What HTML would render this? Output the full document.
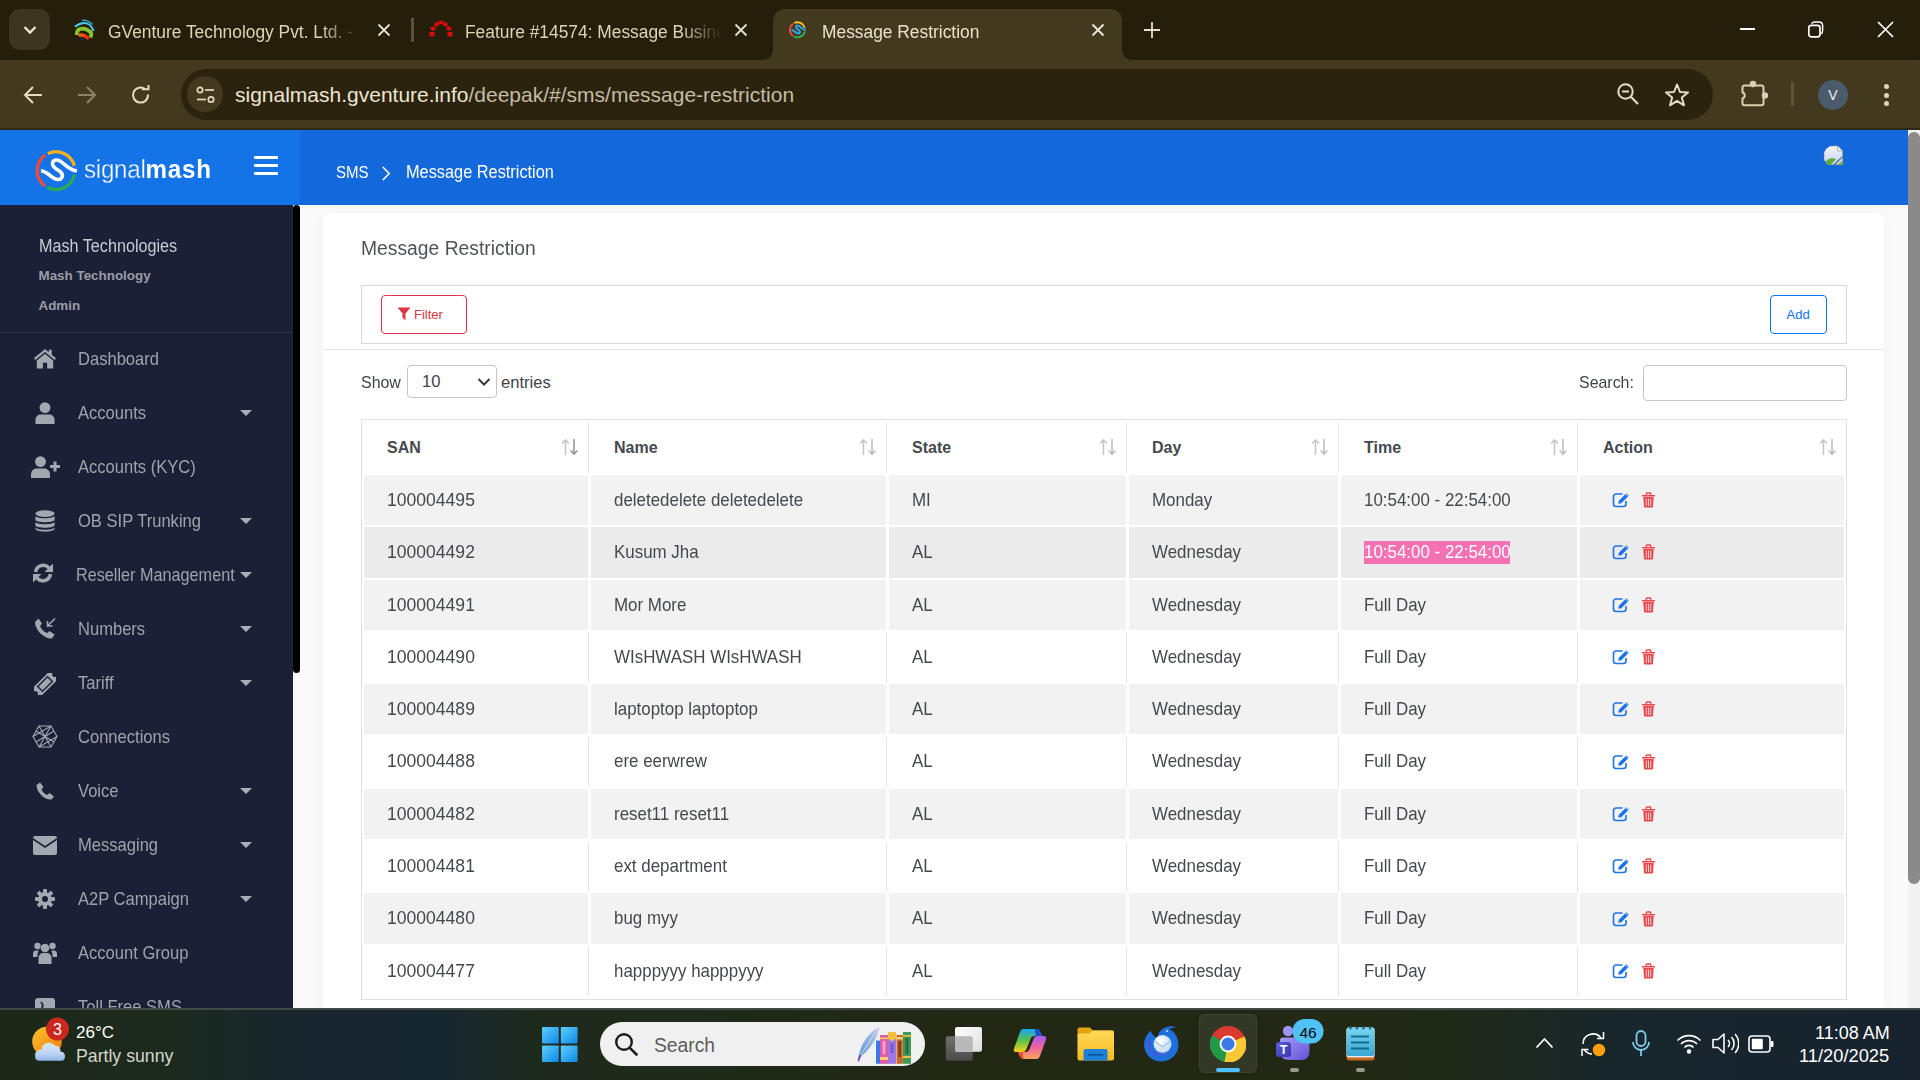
<!DOCTYPE html>
<html><head><meta charset="utf-8">
<style>
*{box-sizing:border-box;margin:0;padding:0}
html,body{width:1920px;height:1080px;overflow:hidden;font-family:"Liberation Sans",sans-serif;background:#fafafa}
.a{position:absolute}
svg{display:block}
/* chrome */
#tabstrip{left:0;top:0;width:1920px;height:61px;background:#251e0a}
#toolbar{left:0;top:60px;width:1920px;height:70px;background:#433b22}
.tabt{font-size:18px;color:#ddd4b8;white-space:nowrap;top:22px;transform:scaleX(0.965);transform-origin:0 0}
#omni{left:181px;top:69px;width:1532px;height:51px;border-radius:26px;background:#2b230e}
/* header */
#hdrL{left:0;top:130px;width:300px;height:75px;background:#1573e8}
#hdrR{left:300px;top:130px;width:1608px;height:75px;background:#1368db}
/* sidebar */
#side{left:0;top:205px;width:293px;height:803px;background:#1c2036;overflow:hidden}
.mi{position:absolute;left:0;width:293px;height:54px}
.mi .t{position:absolute;left:78px;top:17px;font-size:18.4px;line-height:normal;color:#9fa4ab;white-space:nowrap;transform:scaleX(0.9);transform-origin:0 0}
.mi .ic{position:absolute;left:31px;top:14px;width:28px;height:26px}
.mi .car{position:absolute;left:240px;top:25px;width:0;height:0;border-left:6px solid transparent;border-right:6px solid transparent;border-top:6px solid #a9adb6}
/* content */
#content{left:300px;top:205px;width:1608px;height:803px;background:#fafafa}
#card{left:323px;top:213px;width:1561px;height:800px;background:#fff;border-radius:6px;box-shadow:0 0 12px rgba(0,0,0,0.035)}
table{border-collapse:separate;border-spacing:0}
.th{font-weight:bold;font-size:16px;color:#46494f;white-space:nowrap}
.td{font-size:18.4px;color:#45484f;white-space:nowrap;transform:scaleX(0.92);transform-origin:0 0}
.tdn{transform:scaleX(0.955)}
/* taskbar */
#taskbar{left:0;top:1008px;width:1920px;height:72px;background:linear-gradient(90deg,#1d2818 0%,#1c2a1d 8%,#182630 16%,#172730 23%,#1e2a1c 28%,#1f2a1a 36%,#232814 50%,#222814 70%,#1f2a17 75%,#18262d 85%,#17222e 100%);border-top:2px solid #434a45}
</style></head><body>

<!-- ============ BROWSER CHROME ============ -->
<div id="tabstrip" class="a"></div>
<div class="a" style="left:9px;top:9px;width:41px;height:41px;border-radius:11px;background:#3d3521"></div>
<svg class="a" style="left:22px;top:24px" width="16" height="12" viewBox="0 0 16 12"><path d="M2.5 3 L8 8.5 L13.5 3" fill="none" stroke="#ece6d4" stroke-width="2.4"/></svg>
<!-- tab1 -->
<svg class="a" style="left:70px;top:15px" width="30" height="30" viewBox="0 0 30 30">
 <path d="M12 5.3 Q18 4.6 22.5 9.5" fill="none" stroke="#35a6c6" stroke-width="1.5"/>
 <path d="M5 11.8 Q11 6.8 17 8.4 Q21.5 10.3 23.5 16" fill="none" stroke="#46c8ea" stroke-width="2.1"/>
 <path d="M6.8 20 Q6.5 14.8 10.5 13.8 Q16 13 20.5 17 Q22 19 20.5 22.5" fill="none" stroke="#84c62c" stroke-width="3.8"/>
 <defs><linearGradient id="gvr" x1="0" y1="0" x2="1" y2="0"><stop offset="0" stop-color="#ff7a10"/><stop offset="1" stop-color="#ff1a0a"/></linearGradient></defs>
 <path d="M8.5 20.3 Q13.5 18.8 18.8 23.8" fill="none" stroke="url(#gvr)" stroke-width="3.2"/>
 <path d="M10.5 23 Q12.5 23.8 13.8 25.2" fill="none" stroke="#22307a" stroke-width="1.4"/>
</svg>
<div class="a tabt" style="left:108px;width:260px;overflow:hidden;-webkit-mask-image:linear-gradient(90deg,#000 85%,transparent 100%)">GVenture Technology Pvt. Ltd. - Signalmash</div>
<svg class="a" style="left:377px;top:23px" width="14" height="14" viewBox="0 0 14 14"><path d="M1.5 1.5 L12.5 12.5 M12.5 1.5 L1.5 12.5" stroke="#e6dfc9" stroke-width="1.8"/></svg>
<div class="a" style="left:411px;top:18px;width:3px;height:24px;background:#5a523b"></div>
<!-- tab2 -->
<svg class="a" style="left:428px;top:20px" width="26" height="18" viewBox="0 0 26 18">
 <g fill="#d40c0c">
 <rect x="1.5" y="12" width="5" height="4.5"/><rect x="19.5" y="12" width="5" height="4.5"/>
 <rect x="2.8" y="6.6" width="4.6" height="4" transform="rotate(-25 5 8.6)"/><rect x="18.6" y="6.6" width="4.6" height="4" transform="rotate(25 21 8.6)"/>
 <rect x="6.5" y="2.3" width="4.4" height="4" transform="rotate(-45 8.7 4.3)"/><rect x="15.1" y="2.3" width="4.4" height="4" transform="rotate(45 17.3 4.3)"/>
 <rect x="10.8" y="0.6" width="4.4" height="3.6"/>
 </g>
</svg>
<div class="a tabt" style="left:465px;width:266px;overflow:hidden;-webkit-mask-image:linear-gradient(90deg,#000 84%,transparent 100%)">Feature #14574: Message Business Restriction</div>
<svg class="a" style="left:734px;top:23px" width="14" height="14" viewBox="0 0 14 14"><path d="M1.5 1.5 L12.5 12.5 M12.5 1.5 L1.5 12.5" stroke="#e6dfc9" stroke-width="1.8"/></svg>
<!-- active tab -->
<div class="a" style="left:773px;top:9px;width:349px;height:52px;background:#42391f;border-radius:12px 12px 0 0"></div>
<svg class="a" style="left:761px;top:48px" width="12" height="12" viewBox="0 0 12 12"><path d="M0 12 Q12 12 12 0 L12 12 Z" fill="#42391f"/></svg>
<svg class="a" style="left:1122px;top:48px" width="12" height="12" viewBox="0 0 12 12"><path d="M12 12 Q0 12 0 0 L0 12 Z" fill="#42391f"/></svg>
<svg class="a" style="left:787px;top:19px" width="22" height="22" viewBox="0 0 55 52">
 <path d="M15.25 10.12 A18.9 18.9 0 0 0 15.0 40.9" fill="none" stroke="#ef4a3a" stroke-width="4.6"/>
 <path d="M17.82 8.61 A18.9 18.9 0 0 1 44.36 20.71" fill="none" stroke="#f9c21a" stroke-width="4.6"/>
 <path d="M44.6 29.53 A18.9 18.9 0 0 1 17.23 42.29" fill="none" stroke="#2fb45a" stroke-width="4.6"/>
 <path d="M11 26 C17 25.5 22 34.5 28 34.5 C32.5 34.5 34 29.5 30 26.5 C26.5 24 22.5 22.5 22.5 18.5 C22.5 15 26.5 14 30 16 C35 19 40 25.8 47 25.8" fill="none" stroke="#29a9f1" stroke-width="5"/>
</svg>
<div class="a tabt" style="left:822px;color:#e9e2cc">Message Restriction</div>
<svg class="a" style="left:1091px;top:23px" width="14" height="14" viewBox="0 0 14 14"><path d="M1.5 1.5 L12.5 12.5 M12.5 1.5 L1.5 12.5" stroke="#efe9d8" stroke-width="1.8"/></svg>
<svg class="a" style="left:1144px;top:22px" width="16" height="16" viewBox="0 0 16 16"><path d="M8 0 V16 M0 8 H16" stroke="#e6dfc9" stroke-width="1.8"/></svg>
<!-- window controls -->
<div class="a" style="left:1740px;top:28px;width:15px;height:2px;background:#fff"></div>
<svg class="a" style="left:1807px;top:21px" width="17" height="17" viewBox="0 0 17 17"><rect x="1.8" y="4.3" width="11.2" height="11.5" rx="2.6" fill="none" stroke="#fff" stroke-width="1.7"/><path d="M4.6 2.6 Q5.5 1 8 1 H12 Q15.6 1 15.6 4.6 V9.5 Q15.6 12 14.2 12.8" fill="none" stroke="#fff" stroke-width="1.5"/></svg>
<svg class="a" style="left:1877px;top:21px" width="17" height="17" viewBox="0 0 17 17"><path d="M1 1 L16 16 M16 1 L1 16" stroke="#fff" stroke-width="1.7"/></svg>

<div id="toolbar" class="a"></div>
<div class="a" style="left:0;top:60px;width:1920px;height:70px;background:#42391f;border-radius:9px 9px 0 0"></div>
<div class="a" style="left:0;top:128px;width:1920px;height:2px;background:#2f2812"></div>
<svg class="a" style="left:23px;top:85px" width="20" height="20" viewBox="0 0 20 20"><path d="M19 10 H2.5 M10 2 L2 10 L10 18" fill="none" stroke="#e4dcc3" stroke-width="2"/></svg>
<svg class="a" style="left:77px;top:85px" width="20" height="20" viewBox="0 0 20 20"><path d="M1 10 H17.5 M10 2 L18 10 L10 18" fill="none" stroke="#8c836a" stroke-width="2"/></svg>
<svg class="a" style="left:131px;top:85px" width="20" height="20" viewBox="0 0 20 20"><path d="M17 9.5 A7.5 7.5 0 1 1 14.3 4.3" fill="none" stroke="#e4dcc3" stroke-width="2"/><path d="M11 4.2 H17.5 V-2" fill="none" stroke="#e4dcc3" stroke-width="2"/></svg>
<div id="omni" class="a"></div>
<div class="a" style="left:187px;top:76px;width:36px;height:36px;border-radius:18px;background:#42391f"></div>
<svg class="a" style="left:195px;top:84px" width="22" height="22" viewBox="0 0 22 22"><circle cx="5" cy="6" r="2.7" fill="none" stroke="#e4dcc3" stroke-width="1.7"/><path d="M10 6 H19" stroke="#e4dcc3" stroke-width="1.7"/><circle cx="16" cy="15.5" r="2.7" fill="none" stroke="#e4dcc3" stroke-width="1.7"/><path d="M2 15.5 H11" stroke="#e4dcc3" stroke-width="1.7"/></svg>
<div class="a" style="left:235px;top:82.5px;font-size:21px;color:#ece5d2;white-space:nowrap;transform:scaleX(1);transform-origin:0 0">signalmash.gventure.info<span style="color:#c4bca4">/deepak/#/sms/message-restriction</span></div>
<svg class="a" style="left:1616px;top:82px" width="24" height="24" viewBox="0 0 24 24"><circle cx="9.5" cy="9.5" r="7.2" fill="none" stroke="#e4dcc3" stroke-width="2"/><path d="M6 9.5 H13" stroke="#e4dcc3" stroke-width="2"/><path d="M14.8 14.8 L22 22" stroke="#e4dcc3" stroke-width="2.2"/></svg>
<svg class="a" style="left:1664px;top:82px" width="26" height="26" viewBox="0 0 26 26"><path d="M13 2.5 L16 10 L24 10.5 L17.8 15.5 L20 23.3 L13 18.8 L6 23.3 L8.2 15.5 L2 10.5 L10 10 Z" fill="none" stroke="#e4dcc3" stroke-width="2" stroke-linejoin="round"/></svg>
<svg class="a" style="left:1740px;top:80px" width="28" height="28" viewBox="0 0 28 28"><path d="M4.5 5.5 H10.5 A2.6 2.6 0 0 1 15.5 5.5 H21.5 Q23.5 5.5 23.5 7.5 V13 A2.6 2.6 0 0 1 23.5 18 V23.5 Q23.5 25.3 21.5 25.3 H4.5 Q2.5 25.3 2.5 23.5 V18.3 A3 3 0 0 0 2.5 12.5 V7.5 Q2.5 5.5 4.5 5.5 Z" fill="none" stroke="#dccfb0" stroke-width="2" stroke-linejoin="round"/><circle cx="13" cy="4" r="3.2" fill="#dccfb0"/><circle cx="25" cy="15.5" r="3.2" fill="#dccfb0"/></svg>
<div class="a" style="left:1791px;top:82px;width:3px;height:24px;background:#5e5538"></div>
<div class="a" style="left:1818px;top:80px;width:30px;height:30px;border-radius:15px;background:#4a5c6b;color:#f2f2f2;font-size:14px;line-height:30px;text-align:center">V</div>
<div class="a" style="left:1884.2px;top:84.2px;width:5px;height:5px;border-radius:2.5px;background:#e0d6b8"></div>
<div class="a" style="left:1884.2px;top:92.5px;width:5px;height:5px;border-radius:2.5px;background:#e0d6b8"></div>
<div class="a" style="left:1884.2px;top:100.5px;width:5px;height:5px;border-radius:2.5px;background:#e0d6b8"></div>

<!-- ============ HEADER ============ -->
<div id="hdrL" class="a"></div>
<div id="hdrR" class="a"></div>
<svg class="a" style="left:30px;top:145px" width="55" height="52" viewBox="0 0 55 52">
 <path d="M15.25 10.12 A18.9 18.9 0 0 0 15.0 40.9" fill="none" stroke="#ef4a3a" stroke-width="3.3"/>
 <path d="M17.82 8.61 A18.9 18.9 0 0 1 44.36 20.71" fill="none" stroke="#f9b219" stroke-width="3.3"/>
 <path d="M44.6 29.53 A18.9 18.9 0 0 1 17.23 42.29" fill="none" stroke="#2fa94f" stroke-width="3.3"/>
 <path d="M11 26 C17 25.5 22 34.5 28 34.5 C32.5 34.5 34 29.5 30 26.5 C26.5 24 22.5 22.5 22.5 18.5 C22.5 15 26.5 14 30 16 C35 19 40 25.8 47 25.8" fill="none" stroke="#fff" stroke-width="3.6" stroke-linecap="butt"/>
</svg>
<div class="a" style="left:84px;top:154px;font-size:26px;color:#fff;white-space:nowrap;transform:scaleX(0.93);transform-origin:0 0;letter-spacing:-0.3px"><span style="-webkit-text-stroke:0.35px #1573e8">signal</span><b style="font-weight:bold;letter-spacing:0.8px">mash</b></div>
<div class="a" style="left:254px;top:156px;width:24px;height:3px;background:#fff;border-radius:1px"></div>
<div class="a" style="left:254px;top:164px;width:24px;height:3px;background:#fff;border-radius:1px"></div>
<div class="a" style="left:254px;top:172px;width:24px;height:3px;background:#fff;border-radius:1px"></div>
<div class="a" style="left:336px;top:162.7px;font-size:16.5px;color:#fff;white-space:nowrap;transform:scaleX(0.91);transform-origin:0 0">SMS</div>
<svg class="a" style="left:381px;top:165.5px" width="10" height="15" viewBox="0 0 10 15"><path d="M1.8 1 L8.2 7.5 L1.8 14" fill="none" stroke="#fff" stroke-width="1.6"/></svg>
<div class="a" style="left:406px;top:161.3px;font-size:18.3px;color:#fff;white-space:nowrap;transform:scaleX(0.893);transform-origin:0 0">Message Restriction</div>
<svg class="a" style="left:1823px;top:145px" width="26" height="22" viewBox="0 0 26 22">
 <defs><clipPath id="bic"><circle cx="11" cy="11" r="10.5"/><rect x="11" y="0" width="15" height="22"/></clipPath>
 <linearGradient id="bg1" x1="0" y1="0" x2="0" y2="1"><stop offset="0" stop-color="#f4f7fc"/><stop offset="1" stop-color="#c3d3ee"/></linearGradient></defs>
 <g clip-path="url(#bic)">
  <path d="M1 1 H14.5 L19.5 6 V11 L10.5 19.5 H1 Z" fill="url(#bg1)" stroke="#b8a482" stroke-width="0.8"/>
  <path d="M14.5 1 V6 H19.5" fill="#eeeeee" stroke="#a9a9a9" stroke-width="0.9"/>
  <path d="M1 19.5 C3 13.5 9 12 13 14 L8 19.5 Z" fill="#5aae35"/>
  <path d="M12.5 19.5 L19.5 12.5 V19.5 Z" fill="#c9d7ec" stroke="#b8a482" stroke-width="0.8"/>
  <path d="M15 19.5 L19.5 16 V19.5 Z" fill="#5aae35"/>
 </g>
</svg>

<!-- ============ SIDEBAR ============ -->
<div id="side" class="a">
 <div class="a" style="left:38.5px;top:30px;font-size:18.3px;color:#c9cbd2;white-space:nowrap;transform:scaleX(0.885);transform-origin:0 0">Mash Technologies</div>
 <div class="a" style="left:38.5px;top:63.3px;font-size:13.4px;font-weight:bold;color:#9a9da6;white-space:nowrap">Mash Technology</div>
 <div class="a" style="left:38.5px;top:93.3px;font-size:13.4px;font-weight:bold;color:#9a9da6;white-space:nowrap">Admin</div>
 <div class="a" style="left:0;top:127px;width:293px;height:1px;background:#2c3049"></div>
 <!-- menu items: first center at y=358 abs -> 153 rel -->
 <div class="mi" style="top:126px"><svg class="ic" viewBox="0 0 28 26" style="left:30px;top:15px;width:30px;height:25px"><path d="M14 3.2 L2.5 12.8 L4 14.6 L14 6.2 L24 14.6 L25.5 12.8 L21 9.1 V4 H18 V6.5 Z" fill="#a3a7b0"/><path d="M14 8 L5.5 15 V23.5 H11.8 V17.5 H16.2 V23.5 H22.5 V15 Z" fill="#a3a7b0"/></svg><div class="t">Dashboard</div></div>
 <div class="mi" style="top:180px"><svg class="ic" viewBox="0 0 20 22" style="left:35px;top:17px;width:20px;height:22px"><circle cx="10" cy="5.6" r="5.4" fill="#a3a7b0"/><path d="M0.5 22 V18 C0.5 14.5 3 12.6 6 12.6 H14 C17 12.6 19.5 14.5 19.5 18 V22 Z" fill="#a3a7b0"/></svg><div class="t">Accounts</div><div class="car"></div></div>
 <div class="mi" style="top:234px"><svg class="ic" viewBox="0 0 29 22" style="left:31px;top:17px;width:29px;height:22px"><circle cx="9.5" cy="5.6" r="5.4" fill="#a3a7b0"/><path d="M0 22 V18.5 C0 15 2.5 12.6 5.5 12.6 H13.5 C16.5 12.6 19 15 19 18.5 V22 Z" fill="#a3a7b0"/><path d="M24 5.5 V15.5 M19 10.5 H29" stroke="#a3a7b0" stroke-width="3"/></svg><div class="t">Accounts (KYC)</div></div>
 <div class="mi" style="top:288px"><svg class="ic" viewBox="0 0 20 22" style="left:35px;top:17px;width:20px;height:22px"><ellipse cx="10" cy="3.6" rx="9.6" ry="3.4" fill="#a3a7b0"/><path d="M0.4 6 C2 9 18 9 19.6 6 V10 C18 13 2 13 0.4 10 Z" fill="#a3a7b0"/><path d="M0.4 12 C2 15 18 15 19.6 12 V15.5 C18 18.5 2 18.5 0.4 15.5 Z" fill="#a3a7b0"/><path d="M0.4 17.5 C2 20.5 18 20.5 19.6 17.5 V19 C18 22.5 2 22.5 0.4 19 Z" fill="#a3a7b0"/></svg><div class="t">OB SIP Trunking</div><div class="car"></div></div>
 <div class="mi" style="top:342px"><svg class="ic" viewBox="0 0 22 22" style="left:32px;top:15px;width:22px;height:22px"><path d="M3.6 10 A7.6 7.6 0 0 1 16.8 5.8" fill="none" stroke="#a3a7b0" stroke-width="3.6"/><path d="M21 1.5 V10 H12.5 Z" fill="#a3a7b0"/><path d="M18.4 12 A7.6 7.6 0 0 1 5.2 16.2" fill="none" stroke="#a3a7b0" stroke-width="3.6"/><path d="M1 20.5 V12 H9.5 Z" fill="#a3a7b0"/></svg><div class="t" style="left:75.5px;transform:scaleX(0.882)">Reseller Management</div><div class="car"></div></div>
 <div class="mi" style="top:396px"><svg class="ic" viewBox="0 0 22 23" style="left:34px;top:16px;width:22px;height:23px"><path d="M4.5 1.5 L8 6.5 L6 9 C7 12 10 15 13 16 L15.5 14 L20.5 17.5 L18 21.5 C10 22 1 13 1 5 Z" fill="#a3a7b0"/><path d="M21 1.5 L13.5 9 M13.5 4 V9 H18.5" fill="none" stroke="#a3a7b0" stroke-width="1.6"/></svg><div class="t">Numbers</div><div class="car"></div></div>
 <div class="mi" style="top:450px"><svg class="ic" viewBox="0 0 22 22" style="left:34px;top:18px;width:22px;height:22px"><g transform="rotate(-45 11 11)"><path d="M-2.5 5.2 H24.5 V8.6 A2.4 2.4 0 0 0 24.5 13.4 V16.8 H-2.5 V13.4 A2.4 2.4 0 0 0 -2.5 8.6 Z" fill="#a3a7b0"/><rect x="4" y="7.6" width="14" height="6.8" fill="none" stroke="#1c2036" stroke-width="1.4"/></g></svg><div class="t">Tariff</div><div class="car"></div></div>
 <div class="mi" style="top:504px"><svg class="ic" viewBox="0 0 26 23" style="left:32px;top:16px;width:26px;height:23px"><g fill="none" stroke="#a3a7b0" stroke-width="1.1"><path d="M7 1 H19 L25 11.5 L19 22 H7 L1 11.5 Z"/><path d="M7 1 L19 22 M19 1 L7 22 M1 11.5 L19 1 M25 11.5 L7 22 M4 6 L22 17 M4 17 L22 6"/></g></svg><div class="t">Connections</div></div>
 <div class="mi" style="top:558px"><svg class="ic" viewBox="0 0 19 18" style="left:36px;top:19px;width:19px;height:18px"><path d="M4 0.5 L7.5 5 L5.5 7.5 C6.5 10 8.5 12 11 13 L13.5 11 L18 14.5 L15.5 17.5 C8 18 0.5 10 0.5 3 Z" fill="#a3a7b0"/></svg><div class="t">Voice</div><div class="car"></div></div>
 <div class="mi" style="top:612px"><svg class="ic" viewBox="0 0 24 19" style="left:33px;top:19px;width:24px;height:19px"><rect x="0" y="0" width="24" height="19" rx="2" fill="#a3a7b0"/><path d="M0 3 L12 11 L24 3" fill="none" stroke="#1c2036" stroke-width="1.6"/></svg><div class="t">Messaging</div><div class="car"></div></div>
 <div class="mi" style="top:666px"><svg class="ic" viewBox="0 0 20 20" style="left:35px;top:18px;width:20px;height:20px"><g fill="#a3a7b0"><circle cx="10" cy="10" r="6.8"/><rect x="8" y="0" width="4" height="20" rx="1"/><rect x="0" y="8" width="20" height="4" rx="1"/><rect x="8" y="0" width="4" height="20" rx="1" transform="rotate(45 10 10)"/><rect x="8" y="0" width="4" height="20" rx="1" transform="rotate(-45 10 10)"/></g><circle cx="10" cy="10" r="3" fill="#1c2036"/></svg><div class="t">A2P Campaign</div><div class="car"></div></div>
 <div class="mi" style="top:720px"><svg class="ic" viewBox="0 0 24 22" style="left:33px;top:17px;width:24px;height:22px"><g fill="#a3a7b0"><circle cx="4.5" cy="4" r="3.2"/><circle cx="19.5" cy="4" r="3.2"/><circle cx="12" cy="6" r="4.3"/><path d="M0 15 V11.5 C0 9.5 1.5 8.5 3 8.5 H6 C4.5 10 4.5 12 4.5 15 Z"/><path d="M24 15 V11.5 C24 9.5 22.5 8.5 21 8.5 H18 C19.5 10 19.5 12 19.5 15 Z"/><path d="M5.5 22 V16 C5.5 13 7.5 11 10 11 H14 C16.5 11 18.5 13 18.5 16 V22 Z"/></g></svg><div class="t">Account Group</div></div>
 <div class="mi" style="top:774px"><svg class="ic" viewBox="0 0 22 22" style="left:35px;top:19px;width:22px;height:22px"><rect x="0" y="0" width="20" height="22" rx="3" fill="#a3a7b0"/><path d="M6 4 L8 7 L7 8.5 C7.5 10 9 11.5 10.5 12 L12 11 L14.5 13" fill="none" stroke="#1c2036" stroke-width="1.6"/></svg><div class="t">Toll Free SMS</div></div>
</div>
<div class="a" style="left:293px;top:205px;width:7px;height:468px;background:#000;border-radius:3.5px"></div>

<!-- ============ CONTENT ============ -->
<div id="content" class="a"></div>
<div id="card" class="a"></div>
<div class="a" style="left:361px;top:236.6px;font-size:20px;color:#4f5359;white-space:nowrap;transform:scaleX(0.965);transform-origin:0 0">Message Restriction</div>
<div class="a" style="left:361px;top:285px;width:1486px;height:59px;border:1px solid #d9d9d9"></div>
<div class="a" style="left:381px;top:295px;width:86px;height:39px;border:1px solid #dc3545;border-radius:4px"></div>
<svg class="a" style="left:397px;top:307px" width="14" height="14" viewBox="0 0 14 14"><path d="M0.5 0.5 H13.5 L8.5 6.5 V13.5 L5.5 10.8 V6.5 Z" fill="#dc3545"/></svg>
<div class="a" style="left:414px;top:307px;font-size:13px;color:#dc3545;white-space:nowrap">Filter</div>
<div class="a" style="left:1770px;top:295px;width:57px;height:39px;border:1px solid #0b73f5;border-radius:4px"></div>
<div class="a" style="left:1786.5px;top:307px;font-size:13px;color:#0b73f5;white-space:nowrap">Add</div>
<div class="a" style="left:323px;top:349px;width:1561px;height:1px;background:#e6e6e6"></div>
<div class="a" style="left:361px;top:373px;font-size:16.6px;color:#3f434a;white-space:nowrap;transform:scaleX(0.96);transform-origin:0 0">Show</div>
<div class="a" style="left:407px;top:365px;width:90px;height:33px;border:1px solid #c4c6ca;border-radius:4px;background:#fff"></div>
<div class="a" style="left:422px;top:372px;font-size:16.6px;color:#3f434a;white-space:nowrap">10</div>
<svg class="a" style="left:477px;top:377px" width="14" height="10" viewBox="0 0 14 10"><path d="M1.5 2 L7 7.5 L12.5 2" fill="none" stroke="#343a40" stroke-width="2"/></svg>
<div class="a" style="left:501px;top:373px;font-size:16.6px;color:#3f434a;white-space:nowrap">entries</div>
<div class="a" style="left:1579px;top:373px;font-size:16.6px;color:#3f434a;white-space:nowrap;transform:scaleX(0.96);transform-origin:0 0">Search:</div>
<div class="a" style="left:1643px;top:365px;width:204px;height:36px;border:1px solid #c4c6ca;border-radius:4px;background:#fff"></div>
<!--TABLE-->
<div class="a" style="left:361px;top:419px;width:1486px;height:581px;border:1px solid #dde0e5"></div>
<div class="a th" style="left:387px;top:438.5px">SAN</div>
<svg class="a" style="left:561px;top:438px" width="18" height="18" viewBox="0 0 18 18"><path d="M4.5 17 V2 M1.2 5.5 L4.5 1.8 L7.8 5.5" fill="none" stroke="#c2c4c8" stroke-width="1.5"/><path d="M13 1 V16 M9.7 12.5 L13 16.2 L16.3 12.5" fill="none" stroke="#8f9297" stroke-width="1.5"/></svg>
<div class="a" style="left:588px;top:422px;width:1px;height:51px;background:#e2e4e9"></div>
<div class="a th" style="left:614px;top:438.5px">Name</div>
<svg class="a" style="left:859px;top:438px" width="18" height="18" viewBox="0 0 18 18"><path d="M4.5 17 V2 M1.2 5.5 L4.5 1.8 L7.8 5.5" fill="none" stroke="#c2c4c8" stroke-width="1.5"/><path d="M13 1 V16 M9.7 12.5 L13 16.2 L16.3 12.5" fill="none" stroke="#b8babe" stroke-width="1.5"/></svg>
<div class="a" style="left:886px;top:422px;width:1px;height:51px;background:#e2e4e9"></div>
<div class="a th" style="left:912px;top:438.5px">State</div>
<svg class="a" style="left:1099px;top:438px" width="18" height="18" viewBox="0 0 18 18"><path d="M4.5 17 V2 M1.2 5.5 L4.5 1.8 L7.8 5.5" fill="none" stroke="#c2c4c8" stroke-width="1.5"/><path d="M13 1 V16 M9.7 12.5 L13 16.2 L16.3 12.5" fill="none" stroke="#b8babe" stroke-width="1.5"/></svg>
<div class="a" style="left:1126px;top:422px;width:1px;height:51px;background:#e2e4e9"></div>
<div class="a th" style="left:1152px;top:438.5px">Day</div>
<svg class="a" style="left:1311px;top:438px" width="18" height="18" viewBox="0 0 18 18"><path d="M4.5 17 V2 M1.2 5.5 L4.5 1.8 L7.8 5.5" fill="none" stroke="#c2c4c8" stroke-width="1.5"/><path d="M13 1 V16 M9.7 12.5 L13 16.2 L16.3 12.5" fill="none" stroke="#b8babe" stroke-width="1.5"/></svg>
<div class="a" style="left:1338px;top:422px;width:1px;height:51px;background:#e2e4e9"></div>
<div class="a th" style="left:1364px;top:438.5px">Time</div>
<svg class="a" style="left:1550px;top:438px" width="18" height="18" viewBox="0 0 18 18"><path d="M4.5 17 V2 M1.2 5.5 L4.5 1.8 L7.8 5.5" fill="none" stroke="#c2c4c8" stroke-width="1.5"/><path d="M13 1 V16 M9.7 12.5 L13 16.2 L16.3 12.5" fill="none" stroke="#b8babe" stroke-width="1.5"/></svg>
<div class="a" style="left:1577px;top:422px;width:1px;height:51px;background:#e2e4e9"></div>
<div class="a th" style="left:1603px;top:438.5px">Action</div>
<svg class="a" style="left:1819px;top:438px" width="18" height="18" viewBox="0 0 18 18"><path d="M4.5 17 V2 M1.2 5.5 L4.5 1.8 L7.8 5.5" fill="none" stroke="#c2c4c8" stroke-width="1.5"/><path d="M13 1 V16 M9.7 12.5 L13 16.2 L16.3 12.5" fill="none" stroke="#b8babe" stroke-width="1.5"/></svg>
<div class="a" style="left:363.5px;top:475.0px;width:224.5px;height:50.3px;background:#f2f2f2"></div>
<div class="a" style="left:590.5px;top:475.0px;width:295.5px;height:50.3px;background:#f2f2f2"></div>
<div class="a" style="left:888.5px;top:475.0px;width:237.5px;height:50.3px;background:#f2f2f2"></div>
<div class="a" style="left:1128.5px;top:475.0px;width:209.5px;height:50.3px;background:#f2f2f2"></div>
<div class="a" style="left:1340.5px;top:475.0px;width:236.5px;height:50.3px;background:#f2f2f2"></div>
<div class="a" style="left:1579.5px;top:475.0px;width:264.5px;height:50.3px;background:#f2f2f2"></div>
<div class="a td tdn" style="left:387px;top:488.9px">100004495</div>
<div class="a td" style="left:614px;top:488.9px">deletedelete deletedelete</div>
<div class="a td" style="left:912px;top:488.9px">MI</div>
<div class="a td" style="left:1152px;top:488.9px">Monday</div>
<div class="a td" style="left:1364px;top:488.9px">10:54:00 - 22:54:00</div>
<svg class="a" style="left:1612px;top:492.1px" width="19" height="16" viewBox="0 0 19 16"><path d="M10.5 2 H4 A2.5 2.5 0 0 0 1.5 4.5 V12 A2.5 2.5 0 0 0 4 14.5 H11.5 A2.5 2.5 0 0 0 14 12 V9" fill="none" stroke="#1d74e8" stroke-width="1.6"/><path d="M6.8 8.8 L14.3 1.3 L16.8 3.8 L9.3 11.3 L6.3 11.8 Z" fill="#1d74e8"/><path d="M13.6 2 L16.1 4.5" stroke="#f2f2f2" stroke-width="0.8"/></svg>
<svg class="a" style="left:1641px;top:492.1px" width="15" height="16" viewBox="0 0 15 16"><path d="M1 3 H14 V4.5 H1 Z" fill="#e8474c"/><path d="M5.2 3 V1.8 Q5.2 1 6 1 H9 Q9.8 1 9.8 1.8 V3" fill="none" stroke="#e8474c" stroke-width="1.3"/><path d="M2.3 5 H12.7 L12 14.8 Q11.9 15.6 11.1 15.6 H3.9 Q3.1 15.6 3 14.8 Z" fill="#e8474c"/><path d="M5.3 6.5 V14 M7.5 6.5 V14 M9.7 6.5 V14" stroke="#fbe2e3" stroke-width="0.9"/></svg>
<div class="a" style="left:363.5px;top:527.3px;width:224.5px;height:50.3px;background:#ebebeb"></div>
<div class="a" style="left:590.5px;top:527.3px;width:295.5px;height:50.3px;background:#ebebeb"></div>
<div class="a" style="left:888.5px;top:527.3px;width:237.5px;height:50.3px;background:#ebebeb"></div>
<div class="a" style="left:1128.5px;top:527.3px;width:209.5px;height:50.3px;background:#ebebeb"></div>
<div class="a" style="left:1340.5px;top:527.3px;width:236.5px;height:50.3px;background:#ebebeb"></div>
<div class="a" style="left:1579.5px;top:527.3px;width:264.5px;height:50.3px;background:#ebebeb"></div>
<div class="a td tdn" style="left:387px;top:541.2px">100004492</div>
<div class="a td" style="left:614px;top:541.2px">Kusum Jha</div>
<div class="a td" style="left:912px;top:541.2px">AL</div>
<div class="a td" style="left:1152px;top:541.2px">Wednesday</div>
<div class="a" style="left:1364px;top:540.6px;width:146px;height:23.7px;background:#f472b4"></div>
<div class="a td" style="left:1364px;top:541.2px;color:#fff">10:54:00 - 22:54:00</div>
<svg class="a" style="left:1612px;top:544.4px" width="19" height="16" viewBox="0 0 19 16"><path d="M10.5 2 H4 A2.5 2.5 0 0 0 1.5 4.5 V12 A2.5 2.5 0 0 0 4 14.5 H11.5 A2.5 2.5 0 0 0 14 12 V9" fill="none" stroke="#1d74e8" stroke-width="1.6"/><path d="M6.8 8.8 L14.3 1.3 L16.8 3.8 L9.3 11.3 L6.3 11.8 Z" fill="#1d74e8"/><path d="M13.6 2 L16.1 4.5" stroke="#f2f2f2" stroke-width="0.8"/></svg>
<svg class="a" style="left:1641px;top:544.4px" width="15" height="16" viewBox="0 0 15 16"><path d="M1 3 H14 V4.5 H1 Z" fill="#e8474c"/><path d="M5.2 3 V1.8 Q5.2 1 6 1 H9 Q9.8 1 9.8 1.8 V3" fill="none" stroke="#e8474c" stroke-width="1.3"/><path d="M2.3 5 H12.7 L12 14.8 Q11.9 15.6 11.1 15.6 H3.9 Q3.1 15.6 3 14.8 Z" fill="#e8474c"/><path d="M5.3 6.5 V14 M7.5 6.5 V14 M9.7 6.5 V14" stroke="#fbe2e3" stroke-width="0.9"/></svg>
<div class="a" style="left:363.5px;top:579.6px;width:224.5px;height:50.3px;background:#f2f2f2"></div>
<div class="a" style="left:590.5px;top:579.6px;width:295.5px;height:50.3px;background:#f2f2f2"></div>
<div class="a" style="left:888.5px;top:579.6px;width:237.5px;height:50.3px;background:#f2f2f2"></div>
<div class="a" style="left:1128.5px;top:579.6px;width:209.5px;height:50.3px;background:#f2f2f2"></div>
<div class="a" style="left:1340.5px;top:579.6px;width:236.5px;height:50.3px;background:#f2f2f2"></div>
<div class="a" style="left:1579.5px;top:579.6px;width:264.5px;height:50.3px;background:#f2f2f2"></div>
<div class="a td tdn" style="left:387px;top:593.5px">100004491</div>
<div class="a td" style="left:614px;top:593.5px">Mor More</div>
<div class="a td" style="left:912px;top:593.5px">AL</div>
<div class="a td" style="left:1152px;top:593.5px">Wednesday</div>
<div class="a td" style="left:1364px;top:593.5px">Full Day</div>
<svg class="a" style="left:1612px;top:596.8px" width="19" height="16" viewBox="0 0 19 16"><path d="M10.5 2 H4 A2.5 2.5 0 0 0 1.5 4.5 V12 A2.5 2.5 0 0 0 4 14.5 H11.5 A2.5 2.5 0 0 0 14 12 V9" fill="none" stroke="#1d74e8" stroke-width="1.6"/><path d="M6.8 8.8 L14.3 1.3 L16.8 3.8 L9.3 11.3 L6.3 11.8 Z" fill="#1d74e8"/><path d="M13.6 2 L16.1 4.5" stroke="#f2f2f2" stroke-width="0.8"/></svg>
<svg class="a" style="left:1641px;top:596.8px" width="15" height="16" viewBox="0 0 15 16"><path d="M1 3 H14 V4.5 H1 Z" fill="#e8474c"/><path d="M5.2 3 V1.8 Q5.2 1 6 1 H9 Q9.8 1 9.8 1.8 V3" fill="none" stroke="#e8474c" stroke-width="1.3"/><path d="M2.3 5 H12.7 L12 14.8 Q11.9 15.6 11.1 15.6 H3.9 Q3.1 15.6 3 14.8 Z" fill="#e8474c"/><path d="M5.3 6.5 V14 M7.5 6.5 V14 M9.7 6.5 V14" stroke="#fbe2e3" stroke-width="0.9"/></svg>
<div class="a" style="left:588px;top:632.4px;width:1px;height:50.3px;background:#e4e4ec"></div>
<div class="a" style="left:886px;top:632.4px;width:1px;height:50.3px;background:#e4e4ec"></div>
<div class="a" style="left:1126px;top:632.4px;width:1px;height:50.3px;background:#e4e4ec"></div>
<div class="a" style="left:1338px;top:632.4px;width:1px;height:50.3px;background:#e4e4ec"></div>
<div class="a" style="left:1577px;top:632.4px;width:1px;height:50.3px;background:#e4e4ec"></div>
<div class="a td tdn" style="left:387px;top:645.8px">100004490</div>
<div class="a td" style="left:614px;top:645.8px">WIsHWASH WIsHWASH</div>
<div class="a td" style="left:912px;top:645.8px">AL</div>
<div class="a td" style="left:1152px;top:645.8px">Wednesday</div>
<div class="a td" style="left:1364px;top:645.8px">Full Day</div>
<svg class="a" style="left:1612px;top:649.0px" width="19" height="16" viewBox="0 0 19 16"><path d="M10.5 2 H4 A2.5 2.5 0 0 0 1.5 4.5 V12 A2.5 2.5 0 0 0 4 14.5 H11.5 A2.5 2.5 0 0 0 14 12 V9" fill="none" stroke="#1d74e8" stroke-width="1.6"/><path d="M6.8 8.8 L14.3 1.3 L16.8 3.8 L9.3 11.3 L6.3 11.8 Z" fill="#1d74e8"/><path d="M13.6 2 L16.1 4.5" stroke="#f2f2f2" stroke-width="0.8"/></svg>
<svg class="a" style="left:1641px;top:649.0px" width="15" height="16" viewBox="0 0 15 16"><path d="M1 3 H14 V4.5 H1 Z" fill="#e8474c"/><path d="M5.2 3 V1.8 Q5.2 1 6 1 H9 Q9.8 1 9.8 1.8 V3" fill="none" stroke="#e8474c" stroke-width="1.3"/><path d="M2.3 5 H12.7 L12 14.8 Q11.9 15.6 11.1 15.6 H3.9 Q3.1 15.6 3 14.8 Z" fill="#e8474c"/><path d="M5.3 6.5 V14 M7.5 6.5 V14 M9.7 6.5 V14" stroke="#fbe2e3" stroke-width="0.9"/></svg>
<div class="a" style="left:363.5px;top:684.2px;width:224.5px;height:50.3px;background:#f2f2f2"></div>
<div class="a" style="left:590.5px;top:684.2px;width:295.5px;height:50.3px;background:#f2f2f2"></div>
<div class="a" style="left:888.5px;top:684.2px;width:237.5px;height:50.3px;background:#f2f2f2"></div>
<div class="a" style="left:1128.5px;top:684.2px;width:209.5px;height:50.3px;background:#f2f2f2"></div>
<div class="a" style="left:1340.5px;top:684.2px;width:236.5px;height:50.3px;background:#f2f2f2"></div>
<div class="a" style="left:1579.5px;top:684.2px;width:264.5px;height:50.3px;background:#f2f2f2"></div>
<div class="a td tdn" style="left:387px;top:698.1px">100004489</div>
<div class="a td" style="left:614px;top:698.1px">laptoptop laptoptop</div>
<div class="a td" style="left:912px;top:698.1px">AL</div>
<div class="a td" style="left:1152px;top:698.1px">Wednesday</div>
<div class="a td" style="left:1364px;top:698.1px">Full Day</div>
<svg class="a" style="left:1612px;top:701.4px" width="19" height="16" viewBox="0 0 19 16"><path d="M10.5 2 H4 A2.5 2.5 0 0 0 1.5 4.5 V12 A2.5 2.5 0 0 0 4 14.5 H11.5 A2.5 2.5 0 0 0 14 12 V9" fill="none" stroke="#1d74e8" stroke-width="1.6"/><path d="M6.8 8.8 L14.3 1.3 L16.8 3.8 L9.3 11.3 L6.3 11.8 Z" fill="#1d74e8"/><path d="M13.6 2 L16.1 4.5" stroke="#f2f2f2" stroke-width="0.8"/></svg>
<svg class="a" style="left:1641px;top:701.4px" width="15" height="16" viewBox="0 0 15 16"><path d="M1 3 H14 V4.5 H1 Z" fill="#e8474c"/><path d="M5.2 3 V1.8 Q5.2 1 6 1 H9 Q9.8 1 9.8 1.8 V3" fill="none" stroke="#e8474c" stroke-width="1.3"/><path d="M2.3 5 H12.7 L12 14.8 Q11.9 15.6 11.1 15.6 H3.9 Q3.1 15.6 3 14.8 Z" fill="#e8474c"/><path d="M5.3 6.5 V14 M7.5 6.5 V14 M9.7 6.5 V14" stroke="#fbe2e3" stroke-width="0.9"/></svg>
<div class="a" style="left:588px;top:737.0px;width:1px;height:50.3px;background:#e4e4ec"></div>
<div class="a" style="left:886px;top:737.0px;width:1px;height:50.3px;background:#e4e4ec"></div>
<div class="a" style="left:1126px;top:737.0px;width:1px;height:50.3px;background:#e4e4ec"></div>
<div class="a" style="left:1338px;top:737.0px;width:1px;height:50.3px;background:#e4e4ec"></div>
<div class="a" style="left:1577px;top:737.0px;width:1px;height:50.3px;background:#e4e4ec"></div>
<div class="a td tdn" style="left:387px;top:750.4px">100004488</div>
<div class="a td" style="left:614px;top:750.4px">ere eerwrew</div>
<div class="a td" style="left:912px;top:750.4px">AL</div>
<div class="a td" style="left:1152px;top:750.4px">Wednesday</div>
<div class="a td" style="left:1364px;top:750.4px">Full Day</div>
<svg class="a" style="left:1612px;top:753.6px" width="19" height="16" viewBox="0 0 19 16"><path d="M10.5 2 H4 A2.5 2.5 0 0 0 1.5 4.5 V12 A2.5 2.5 0 0 0 4 14.5 H11.5 A2.5 2.5 0 0 0 14 12 V9" fill="none" stroke="#1d74e8" stroke-width="1.6"/><path d="M6.8 8.8 L14.3 1.3 L16.8 3.8 L9.3 11.3 L6.3 11.8 Z" fill="#1d74e8"/><path d="M13.6 2 L16.1 4.5" stroke="#f2f2f2" stroke-width="0.8"/></svg>
<svg class="a" style="left:1641px;top:753.6px" width="15" height="16" viewBox="0 0 15 16"><path d="M1 3 H14 V4.5 H1 Z" fill="#e8474c"/><path d="M5.2 3 V1.8 Q5.2 1 6 1 H9 Q9.8 1 9.8 1.8 V3" fill="none" stroke="#e8474c" stroke-width="1.3"/><path d="M2.3 5 H12.7 L12 14.8 Q11.9 15.6 11.1 15.6 H3.9 Q3.1 15.6 3 14.8 Z" fill="#e8474c"/><path d="M5.3 6.5 V14 M7.5 6.5 V14 M9.7 6.5 V14" stroke="#fbe2e3" stroke-width="0.9"/></svg>
<div class="a" style="left:363.5px;top:788.8px;width:224.5px;height:50.3px;background:#f2f2f2"></div>
<div class="a" style="left:590.5px;top:788.8px;width:295.5px;height:50.3px;background:#f2f2f2"></div>
<div class="a" style="left:888.5px;top:788.8px;width:237.5px;height:50.3px;background:#f2f2f2"></div>
<div class="a" style="left:1128.5px;top:788.8px;width:209.5px;height:50.3px;background:#f2f2f2"></div>
<div class="a" style="left:1340.5px;top:788.8px;width:236.5px;height:50.3px;background:#f2f2f2"></div>
<div class="a" style="left:1579.5px;top:788.8px;width:264.5px;height:50.3px;background:#f2f2f2"></div>
<div class="a td tdn" style="left:387px;top:802.7px">100004482</div>
<div class="a td" style="left:614px;top:802.7px">reset11 reset11</div>
<div class="a td" style="left:912px;top:802.7px">AL</div>
<div class="a td" style="left:1152px;top:802.7px">Wednesday</div>
<div class="a td" style="left:1364px;top:802.7px">Full Day</div>
<svg class="a" style="left:1612px;top:805.9px" width="19" height="16" viewBox="0 0 19 16"><path d="M10.5 2 H4 A2.5 2.5 0 0 0 1.5 4.5 V12 A2.5 2.5 0 0 0 4 14.5 H11.5 A2.5 2.5 0 0 0 14 12 V9" fill="none" stroke="#1d74e8" stroke-width="1.6"/><path d="M6.8 8.8 L14.3 1.3 L16.8 3.8 L9.3 11.3 L6.3 11.8 Z" fill="#1d74e8"/><path d="M13.6 2 L16.1 4.5" stroke="#f2f2f2" stroke-width="0.8"/></svg>
<svg class="a" style="left:1641px;top:805.9px" width="15" height="16" viewBox="0 0 15 16"><path d="M1 3 H14 V4.5 H1 Z" fill="#e8474c"/><path d="M5.2 3 V1.8 Q5.2 1 6 1 H9 Q9.8 1 9.8 1.8 V3" fill="none" stroke="#e8474c" stroke-width="1.3"/><path d="M2.3 5 H12.7 L12 14.8 Q11.9 15.6 11.1 15.6 H3.9 Q3.1 15.6 3 14.8 Z" fill="#e8474c"/><path d="M5.3 6.5 V14 M7.5 6.5 V14 M9.7 6.5 V14" stroke="#fbe2e3" stroke-width="0.9"/></svg>
<div class="a" style="left:588px;top:841.6px;width:1px;height:50.3px;background:#e4e4ec"></div>
<div class="a" style="left:886px;top:841.6px;width:1px;height:50.3px;background:#e4e4ec"></div>
<div class="a" style="left:1126px;top:841.6px;width:1px;height:50.3px;background:#e4e4ec"></div>
<div class="a" style="left:1338px;top:841.6px;width:1px;height:50.3px;background:#e4e4ec"></div>
<div class="a" style="left:1577px;top:841.6px;width:1px;height:50.3px;background:#e4e4ec"></div>
<div class="a td tdn" style="left:387px;top:855.0px">100004481</div>
<div class="a td" style="left:614px;top:855.0px">ext department</div>
<div class="a td" style="left:912px;top:855.0px">AL</div>
<div class="a td" style="left:1152px;top:855.0px">Wednesday</div>
<div class="a td" style="left:1364px;top:855.0px">Full Day</div>
<svg class="a" style="left:1612px;top:858.2px" width="19" height="16" viewBox="0 0 19 16"><path d="M10.5 2 H4 A2.5 2.5 0 0 0 1.5 4.5 V12 A2.5 2.5 0 0 0 4 14.5 H11.5 A2.5 2.5 0 0 0 14 12 V9" fill="none" stroke="#1d74e8" stroke-width="1.6"/><path d="M6.8 8.8 L14.3 1.3 L16.8 3.8 L9.3 11.3 L6.3 11.8 Z" fill="#1d74e8"/><path d="M13.6 2 L16.1 4.5" stroke="#f2f2f2" stroke-width="0.8"/></svg>
<svg class="a" style="left:1641px;top:858.2px" width="15" height="16" viewBox="0 0 15 16"><path d="M1 3 H14 V4.5 H1 Z" fill="#e8474c"/><path d="M5.2 3 V1.8 Q5.2 1 6 1 H9 Q9.8 1 9.8 1.8 V3" fill="none" stroke="#e8474c" stroke-width="1.3"/><path d="M2.3 5 H12.7 L12 14.8 Q11.9 15.6 11.1 15.6 H3.9 Q3.1 15.6 3 14.8 Z" fill="#e8474c"/><path d="M5.3 6.5 V14 M7.5 6.5 V14 M9.7 6.5 V14" stroke="#fbe2e3" stroke-width="0.9"/></svg>
<div class="a" style="left:363.5px;top:893.4px;width:224.5px;height:50.3px;background:#f2f2f2"></div>
<div class="a" style="left:590.5px;top:893.4px;width:295.5px;height:50.3px;background:#f2f2f2"></div>
<div class="a" style="left:888.5px;top:893.4px;width:237.5px;height:50.3px;background:#f2f2f2"></div>
<div class="a" style="left:1128.5px;top:893.4px;width:209.5px;height:50.3px;background:#f2f2f2"></div>
<div class="a" style="left:1340.5px;top:893.4px;width:236.5px;height:50.3px;background:#f2f2f2"></div>
<div class="a" style="left:1579.5px;top:893.4px;width:264.5px;height:50.3px;background:#f2f2f2"></div>
<div class="a td tdn" style="left:387px;top:907.3px">100004480</div>
<div class="a td" style="left:614px;top:907.3px">bug myy</div>
<div class="a td" style="left:912px;top:907.3px">AL</div>
<div class="a td" style="left:1152px;top:907.3px">Wednesday</div>
<div class="a td" style="left:1364px;top:907.3px">Full Day</div>
<svg class="a" style="left:1612px;top:910.5px" width="19" height="16" viewBox="0 0 19 16"><path d="M10.5 2 H4 A2.5 2.5 0 0 0 1.5 4.5 V12 A2.5 2.5 0 0 0 4 14.5 H11.5 A2.5 2.5 0 0 0 14 12 V9" fill="none" stroke="#1d74e8" stroke-width="1.6"/><path d="M6.8 8.8 L14.3 1.3 L16.8 3.8 L9.3 11.3 L6.3 11.8 Z" fill="#1d74e8"/><path d="M13.6 2 L16.1 4.5" stroke="#f2f2f2" stroke-width="0.8"/></svg>
<svg class="a" style="left:1641px;top:910.5px" width="15" height="16" viewBox="0 0 15 16"><path d="M1 3 H14 V4.5 H1 Z" fill="#e8474c"/><path d="M5.2 3 V1.8 Q5.2 1 6 1 H9 Q9.8 1 9.8 1.8 V3" fill="none" stroke="#e8474c" stroke-width="1.3"/><path d="M2.3 5 H12.7 L12 14.8 Q11.9 15.6 11.1 15.6 H3.9 Q3.1 15.6 3 14.8 Z" fill="#e8474c"/><path d="M5.3 6.5 V14 M7.5 6.5 V14 M9.7 6.5 V14" stroke="#fbe2e3" stroke-width="0.9"/></svg>
<div class="a" style="left:588px;top:946.2px;width:1px;height:50.3px;background:#e4e4ec"></div>
<div class="a" style="left:886px;top:946.2px;width:1px;height:50.3px;background:#e4e4ec"></div>
<div class="a" style="left:1126px;top:946.2px;width:1px;height:50.3px;background:#e4e4ec"></div>
<div class="a" style="left:1338px;top:946.2px;width:1px;height:50.3px;background:#e4e4ec"></div>
<div class="a" style="left:1577px;top:946.2px;width:1px;height:50.3px;background:#e4e4ec"></div>
<div class="a td tdn" style="left:387px;top:959.6px">100004477</div>
<div class="a td" style="left:614px;top:959.6px">happpyyy happpyyy</div>
<div class="a td" style="left:912px;top:959.6px">AL</div>
<div class="a td" style="left:1152px;top:959.6px">Wednesday</div>
<div class="a td" style="left:1364px;top:959.6px">Full Day</div>
<svg class="a" style="left:1612px;top:962.9px" width="19" height="16" viewBox="0 0 19 16"><path d="M10.5 2 H4 A2.5 2.5 0 0 0 1.5 4.5 V12 A2.5 2.5 0 0 0 4 14.5 H11.5 A2.5 2.5 0 0 0 14 12 V9" fill="none" stroke="#1d74e8" stroke-width="1.6"/><path d="M6.8 8.8 L14.3 1.3 L16.8 3.8 L9.3 11.3 L6.3 11.8 Z" fill="#1d74e8"/><path d="M13.6 2 L16.1 4.5" stroke="#f2f2f2" stroke-width="0.8"/></svg>
<svg class="a" style="left:1641px;top:962.9px" width="15" height="16" viewBox="0 0 15 16"><path d="M1 3 H14 V4.5 H1 Z" fill="#e8474c"/><path d="M5.2 3 V1.8 Q5.2 1 6 1 H9 Q9.8 1 9.8 1.8 V3" fill="none" stroke="#e8474c" stroke-width="1.3"/><path d="M2.3 5 H12.7 L12 14.8 Q11.9 15.6 11.1 15.6 H3.9 Q3.1 15.6 3 14.8 Z" fill="#e8474c"/><path d="M5.3 6.5 V14 M7.5 6.5 V14 M9.7 6.5 V14" stroke="#fbe2e3" stroke-width="0.9"/></svg>
<!--/TABLE-->

<!-- ============ TASKBAR ============ -->
<div id="taskbar" class="a"></div>
<!-- weather -->
<svg class="a" style="left:30px;top:1016px" width="42" height="48" viewBox="0 0 42 48">
 <defs><linearGradient id="sun" x1="0" y1="0" x2="1" y2="1"><stop offset="0" stop-color="#f8c22a"/><stop offset="1" stop-color="#f27a10"/></linearGradient>
 <linearGradient id="cld" x1="0" y1="0" x2="0" y2="1"><stop offset="0" stop-color="#dce8f8"/><stop offset="0.6" stop-color="#bcd3f2"/><stop offset="1" stop-color="#8fb6ea"/></linearGradient></defs>
 <circle cx="17" cy="25.5" r="14.8" fill="url(#sun)"/>
 <path d="M9 44.7 H31 Q35 44.7 35 40.5 Q35 36 30.5 35.5 Q30.5 30 25 29.5 Q22 26 17 27 Q12 28 11.5 33.5 Q5 34 5 39.5 Q5 44.7 9 44.7 Z" fill="url(#cld)"/>
 <circle cx="27.5" cy="13" r="11.5" fill="#c8281e"/>
 <text x="27.5" y="19" font-family="Liberation Sans" font-size="16" fill="#fff" text-anchor="middle">3</text>
</svg>
<div class="a" style="left:76px;top:1023px;font-size:17px;color:#fff;white-space:nowrap">26°C</div>
<div class="a" style="left:76px;top:1046px;font-size:17.7px;color:#d6d6d0;white-space:nowrap">Partly sunny</div>
<!-- start -->
<svg class="a" style="left:542px;top:1027px" width="36" height="35" viewBox="0 0 36 35">
 <defs><linearGradient id="win" x1="0" y1="0" x2="1" y2="1"><stop offset="0" stop-color="#5fd0ff"/><stop offset="1" stop-color="#0b87e4"/></linearGradient></defs>
 <rect x="0" y="0" width="16.8" height="16.5" rx="1" fill="url(#win)"/><rect x="18.8" y="0" width="16.8" height="16.5" rx="1" fill="url(#win)"/>
 <rect x="0" y="18.5" width="16.8" height="16.5" rx="1" fill="url(#win)"/><rect x="18.8" y="18.5" width="16.8" height="16.5" rx="1" fill="url(#win)"/>
</svg>
<!-- search -->
<div class="a" style="left:600px;top:1022px;width:325px;height:44px;border-radius:22px;background:#f0f0f0"></div>
<svg class="a" style="left:614px;top:1032px" width="24" height="24" viewBox="0 0 24 24"><circle cx="10" cy="10" r="7.8" fill="none" stroke="#1b1b1b" stroke-width="2.4"/><path d="M15.8 15.8 L22.5 22.5" stroke="#1b1b1b" stroke-width="2.6" stroke-linecap="round"/></svg>
<div class="a" style="left:654px;top:1034.5px;font-size:19.3px;color:#5c5c5c;white-space:nowrap">Search</div>
<svg class="a" style="left:855px;top:1026px" width="58" height="40" viewBox="0 0 58 40">
 <defs><linearGradient id="fth" x1="0" y1="1" x2="1" y2="0"><stop offset="0" stop-color="#5c9ad8"/><stop offset="1" stop-color="#c0c8f0"/></linearGradient></defs>
 <path d="M4 30 C5 20 13 6 24.5 1 C22 12 15 24 6 30 Z" fill="url(#fth)"/>
 <path d="M5 30 L23 3" stroke="#f0e8d0" stroke-width="0.8"/>
 <path d="M2.5 35 L4 28.5 L6.5 29.5 L4 35.5 Z" fill="#7a4cc0"/>
 <rect x="21" y="14.5" width="4" height="23.3" rx="0.6" fill="#3a7ae8"/>
 <rect x="25" y="9" width="8" height="28.8" fill="#e05aa8"/><rect x="25" y="11.5" width="8" height="1.6" fill="#f8d060"/><rect x="25" y="31" width="8" height="3" fill="#f8d060"/><rect x="27.5" y="14.5" width="3" height="14" rx="1.5" fill="#f0a0d0"/>
 <rect x="33" y="6" width="8" height="31.8" fill="#9a78e8"/><path d="M33 6 H41 V12.5 L37 15.5 L33 12.5 Z" fill="#f2c040"/><rect x="35.5" y="17" width="3" height="10" rx="1.5" fill="#7a58c8"/>
 <rect x="41.5" y="9" width="6.3" height="28.8" fill="#c8682a"/><rect x="41.5" y="11" width="6.3" height="2.5" fill="#f8d070"/><rect x="43.3" y="15" width="2.7" height="16" fill="#8a3e18"/>
 <rect x="48" y="6" width="8" height="31.8" fill="#3f9a5a"/><rect x="48" y="9" width="8" height="1.6" fill="#f2c040"/><rect x="48" y="30" width="8" height="2" fill="#f2c040"/><rect x="50.5" y="12" width="3" height="16" fill="#2a6e3e"/>
</svg>
<!-- task view -->
<svg class="a" style="left:945px;top:1026px" width="38" height="36" viewBox="0 0 38 36">
 <defs><linearGradient id="tvb" x1="0" y1="0" x2="0" y2="1"><stop offset="0" stop-color="#707070"/><stop offset="1" stop-color="#4a4a4a"/></linearGradient>
 <linearGradient id="tvf" x1="0" y1="0" x2="1" y2="1"><stop offset="0" stop-color="#ffffff"/><stop offset="1" stop-color="#dedede"/></linearGradient></defs>
 <rect x="0.8" y="10.2" width="27" height="24.6" rx="2.2" fill="url(#tvb)"/>
 <rect x="10" y="1" width="27" height="24.7" rx="2.2" fill="url(#tvf)"/>
 <path d="M10 10.2 H25.6 Q27.8 10.2 27.8 12.4 V25.7 H12.2 Q10 25.7 10 23.5 Z" fill="#b9b9b9"/>
</svg>
<!-- copilot -->
<svg class="a" style="left:1013px;top:1028px" width="34" height="32" viewBox="0 0 34 32">
 <defs><linearGradient id="cpa" x1="0" y1="0" x2="0" y2="1"><stop offset="0" stop-color="#18a4f5"/><stop offset="0.5" stop-color="#5cc24a"/><stop offset="1" stop-color="#f5d21a"/></linearGradient>
 <linearGradient id="cpb" x1="0" y1="0" x2="0" y2="1"><stop offset="0" stop-color="#a85cf2"/><stop offset="0.5" stop-color="#f2639a"/><stop offset="1" stop-color="#fba55a"/></linearGradient></defs>
 <path d="M10 1 H23 Q26 1 27.5 4.5 L29 8 H21.5 Q18.5 8 17.5 11 L13 22 Q12 24 9.5 24 H3.5 Q0 24 1 20.5 L7 4 Q8 1 10 1 Z" fill="url(#cpa)"/>
 <path d="M22 1 H24 Q26.5 1 27.5 4 L29 8 H22.5 Z" fill="#1d52cf"/>
 <path d="M24 31 H11 Q8 31 6.5 27.5 L5 24 H12.5 Q15.5 24 16.5 21 L21 10 Q22 8 24.5 8 H30.5 Q34 8 33 11.5 L27 28 Q26 31 24 31 Z" fill="url(#cpb)"/>
 <path d="M6.5 27.5 L5 24 H10.5 Q9 27 11 31 Q8 31 6.5 27.5 Z" fill="#e8503a"/>
</svg>
<!-- explorer -->
<svg class="a" style="left:1077px;top:1027px" width="38" height="34" viewBox="0 0 38 34">
 <defs><linearGradient id="exf" x1="0" y1="0" x2="0" y2="1"><stop offset="0" stop-color="#ffd75a"/><stop offset="1" stop-color="#f7bc1c"/></linearGradient></defs>
 <path d="M0.5 2.5 Q0.5 0.5 2.5 0.5 H13 L16 3.5 H35 Q37 3.5 37 5.5 V10 H0.5 Z" fill="#e2a30c"/>
 <path d="M0.5 8.5 Q0.5 6.5 2.5 6.5 H12.5 L15.5 3.5 H35 Q37 3.5 37 5.5 V31.5 Q37 33.5 35 33.5 H2.5 Q0.5 33.5 0.5 31.5 Z" fill="url(#exf)"/>
 <path d="M6.5 33.5 V24 Q6.5 22 8.5 22 H28.5 Q30.5 22 30.5 24 V33.5 Z" fill="#1b80d8"/>
 <rect x="11" y="27" width="15" height="1.6" fill="#0d4f9a"/>
</svg>
<!-- thunderbird -->
<svg class="a" style="left:1143px;top:1026px" width="37" height="36" viewBox="0 0 37 36">
 <defs><radialGradient id="tbe" cx="0.4" cy="0.35" r="0.7"><stop offset="0" stop-color="#ffffff"/><stop offset="1" stop-color="#b8d6f5"/></radialGradient></defs>
 <path d="M8 4.5 C3 9 0 15 1.5 22 C3.5 31 11 36 19 35.5 C28 35 35.5 28 35.5 19 C35.5 11 31 5 26 3 L33 1 C28 -0.5 22 0.5 18.5 4 C15 7 14.5 10 15 12 C11 11 8.5 8 8 4.5 Z" fill="#1f6fdb"/>
 <path d="M4 14 C3 22 8 30 17 31 C10 27 7 21 7.5 15 Z" fill="#5a4fd8" opacity="0.6"/>
 <circle cx="19.5" cy="18" r="9" fill="url(#tbe)"/>
 <path d="M11.5 15 L19.5 21 L27.5 15" fill="none" stroke="#9cc0ec" stroke-width="1.2"/>
 <path d="M12 26 C16 30 24 30 28 25 C24 27 17 27.5 12 26 Z" fill="#6a5ae0" opacity="0.7"/>
 <circle cx="24" cy="5" r="1" fill="#cfe2ff"/>
</svg>
<!-- chrome active -->
<div class="a" style="left:1199px;top:1014px;width:58px;height:59px;border-radius:6px;background:rgba(255,255,255,0.08);border:1px solid rgba(255,255,255,0.06)"></div>
<svg class="a" style="left:1210px;top:1026px" width="36" height="36" viewBox="0 0 36 36">
 <circle cx="18" cy="18" r="18" fill="#db3a2e"/>
 <path d="M18 18 L10 14 L2.2 9.2 A18 18 0 0 0 15.5 35.9 L18.5 26 Z" fill="#1f9a45"/>
 <path d="M18 18 L14.5 36 A18 18 0 0 0 34.5 10.5 L26 14 Z" fill="#fcc934"/>
 <circle cx="18" cy="18" r="8.4" fill="#fff"/><circle cx="18" cy="18" r="6.5" fill="#3b78e7"/>
</svg>
<div class="a" style="left:1216px;top:1068px;width:24px;height:4px;border-radius:2px;background:#4cc2ff"></div>
<!-- teams -->
<svg class="a" style="left:1274px;top:1017px" width="52" height="46" viewBox="0 0 52 46">
 <defs><linearGradient id="tmb" x1="0" y1="0" x2="1" y2="1"><stop offset="0" stop-color="#a69cf8"/><stop offset="1" stop-color="#5f52d8"/></linearGradient>
 <linearGradient id="tmt" x1="0" y1="0" x2="1" y2="1"><stop offset="0" stop-color="#5a5ee0"/><stop offset="1" stop-color="#3a33a8"/></linearGradient></defs>
 <circle cx="14" cy="14" r="5.2" fill="#9d94f2"/>
 <path d="M9 20.5 H33 Q35.5 20.5 35.5 23 V34 Q35.5 43 27 43 H15 Q6 43 6 34 V23 Q6 20.5 9 20.5 Z" fill="url(#tmb)"/>
 <rect x="2" y="25" width="15" height="15" rx="3" fill="url(#tmt)"/>
 <text x="9.5" y="37" font-family="Liberation Sans" font-weight="bold" font-size="12.5" fill="#fff" text-anchor="middle">T</text>
 <rect x="18.5" y="2" width="31" height="24.5" rx="12.2" fill="#4fc3f7"/>
 <text x="34" y="20.5" font-family="Liberation Sans" font-size="15.5" fill="#0a0a0a" text-anchor="middle">46</text>
</svg>
<div class="a" style="left:1290px;top:1068px;width:9px;height:4px;border-radius:2px;background:#9a9a90"></div>
<!-- notepad -->
<svg class="a" style="left:1346px;top:1025px" width="29" height="38" viewBox="0 0 29 37">
 <defs><linearGradient id="npg" x1="0" y1="0" x2="0" y2="1"><stop offset="0" stop-color="#7cd4f2"/><stop offset="1" stop-color="#38a8d4"/></linearGradient></defs>
 <rect x="0.5" y="2" width="28" height="33" rx="2.5" fill="#c4651a"/>
 <rect x="0.5" y="2" width="28" height="30" rx="2.5" fill="#e8e8e8"/>
 <rect x="0.5" y="2" width="28" height="28.5" rx="2.5" fill="url(#npg)"/>
 <path d="M4.5 0.5 L6 2.5 L4.5 4.5 L3 2.5 Z M11 0.5 L12.5 2.5 L11 4.5 L9.5 2.5 Z M17.5 0.5 L19 2.5 L17.5 4.5 L16 2.5 Z M24 0.5 L25.5 2.5 L24 4.5 L22.5 2.5 Z" fill="#0f6e8e"/>
 <path d="M5 11 H23 M5 17 H23 M5 23 H23" stroke="#0f6e8e" stroke-width="1.8"/>
</svg>
<div class="a" style="left:1356px;top:1068px;width:9px;height:4px;border-radius:2px;background:#9a9a90"></div>
<!-- tray -->
<svg class="a" style="left:1535px;top:1037px" width="19" height="12" viewBox="0 0 19 12"><path d="M1.5 10.5 L9.5 2 L17.5 10.5" fill="none" stroke="#fff" stroke-width="1.8"/></svg>
<svg class="a" style="left:1580px;top:1030px" width="28" height="28" viewBox="0 0 28 28">
 <path d="M3 14 A10 10 0 0 1 21 8" fill="none" stroke="#fff" stroke-width="1.5"/><path d="M23.5 2 V8.5 H17" fill="none" stroke="#fff" stroke-width="1.5"/>
 <path d="M12 24 A10 10 0 0 1 4.5 20" fill="none" stroke="#fff" stroke-width="1.5"/><path d="M2 26 V19.5 H8.5" fill="none" stroke="#fff" stroke-width="1.5"/>
 <circle cx="19" cy="20" r="6.2" fill="#ff9f0a"/>
</svg>
<svg class="a" style="left:1631px;top:1030px" width="20" height="27" viewBox="0 0 20 27"><rect x="5.5" y="1" width="9" height="15" rx="4.5" fill="none" stroke="#7fcdea" stroke-width="1.8"/><path d="M2 12 A8 8 0 0 0 18 12 M10 20 V26" fill="none" stroke="#7fcdea" stroke-width="1.8"/></svg>
<svg class="a" style="left:1676px;top:1033px" width="26" height="21" viewBox="0 0 26 21"><path d="M1.5 7.5 A16 16 0 0 1 24.5 7.5 M5 11 A11 11 0 0 1 21 11 M8.5 14.5 A6 6 0 0 1 17.5 14.5" fill="none" stroke="#fff" stroke-width="1.7"/><circle cx="13" cy="18.5" r="2.2" fill="#fff"/></svg>
<svg class="a" style="left:1711px;top:1032px" width="28" height="23" viewBox="0 0 28 23"><path d="M2 7.5 H7 L13 2 V21 L7 15.5 H2 Z" fill="none" stroke="#fff" stroke-width="1.6" stroke-linejoin="round"/><path d="M17 8 A5 5 0 0 1 17 15 M20.5 5 A9.5 9.5 0 0 1 20.5 18 M24 2 A14 14 0 0 1 24 21" fill="none" stroke="#fff" stroke-width="1.6"/></svg>
<svg class="a" style="left:1748px;top:1035px" width="26" height="18" viewBox="0 0 26 18"><rect x="1" y="1" width="21" height="16" rx="3" fill="none" stroke="#fff" stroke-width="1.6"/><rect x="3.8" y="3.8" width="11" height="10.4" rx="1" fill="#fff"/><rect x="22.5" y="6" width="3" height="6" rx="1" fill="#fff"/></svg>
<div class="a" style="left:1815px;top:1022.5px;font-size:18px;color:#fff;white-space:nowrap">11:08 AM</div>
<div class="a" style="left:1799px;top:1045px;font-size:18.3px;color:#fff;white-space:nowrap">11/20/2025</div>
<!-- page scrollbar -->
<div class="a" style="left:1908px;top:130px;width:12px;height:878px;background:#f1f1f1"></div>
<div class="a" style="left:1908px;top:132px;width:12px;height:752px;border-radius:6px;background:#8a8a8a"></div>

</body></html>
